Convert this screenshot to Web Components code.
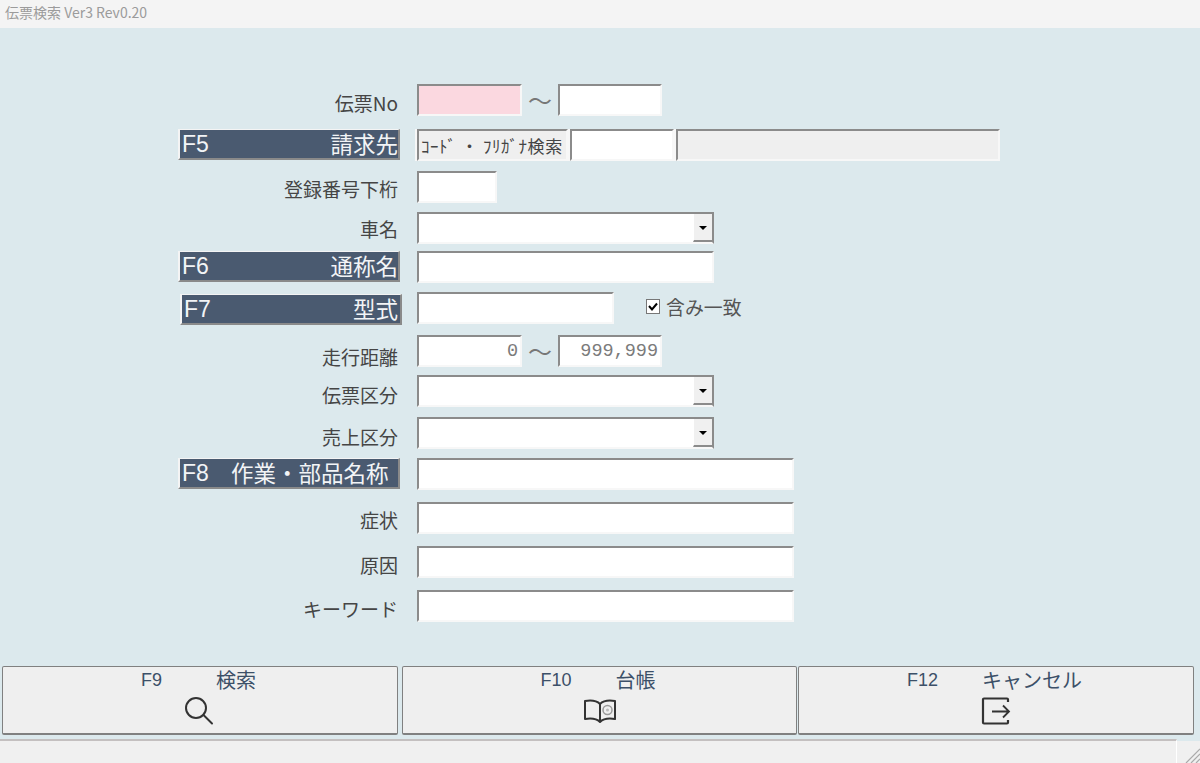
<!DOCTYPE html>
<html lang="ja">
<head>
<meta charset="utf-8">
<title>伝票検索</title>
<style>
  html, body { margin: 0; height: 100%; background: #dce9ed; overflow: hidden; }
  body { font-family: "Noto Sans CJK JP", "Liberation Sans", sans-serif; }
</style>
</head>
<body>
<slip-search>
  <title-bar slot="title">伝票検索 Ver3 Rev0.20</title-bar>

  <form-row gap="56" label="伝票No" drop="4">
    <text-field width="105" pink></text-field><range-mark></range-mark><text-field width="104"></text-field>
  </form-row>
  <form-row gap="13">
    <key-label slot="label" fkey="F5">請求先</key-label>
    <lookup-field></lookup-field>
  </form-row>
  <form-row gap="10" label="登録番号下桁" drop="3">
    <text-field width="80"></text-field>
  </form-row>
  <form-row gap="9" label="車名" drop="2">
    <combo-box></combo-box>
  </form-row>
  <form-row gap="7">
    <key-label slot="label" fkey="F6">通称名</key-label>
    <text-field width="297"></text-field>
  </form-row>
  <form-row gap="9">
    <key-label slot="label" fkey="F7" shift>型式</key-label>
    <text-field width="197"></text-field>
    <check-box>含み一致</check-box>
  </form-row>
  <form-row gap="11" label="走行距離" drop="7">
    <text-field width="105" value="0"></text-field><range-mark></range-mark><text-field width="104" value="999,999"></text-field>
  </form-row>
  <form-row gap="8" label="伝票区分" drop="5">
    <combo-box></combo-box>
  </form-row>
  <form-row gap="10" label="売上区分" drop="5">
    <combo-box></combo-box>
  </form-row>
  <form-row gap="9">
    <key-label slot="label" fkey="F8" tight>作業・部品名称</key-label>
    <text-field width="377"></text-field>
  </form-row>
  <form-row gap="12" label="症状" drop="3"><text-field width="377"></text-field></form-row>
  <form-row gap="12" label="原因" drop="4"><text-field width="377"></text-field></form-row>
  <form-row gap="12" label="キーワード" drop="4"><text-field width="377"></text-field></form-row>

  <fn-button slot="buttons" fkey="F9" width="396" after="4">検索
    <svg slot="icon" width="32" height="30" viewBox="0 0 32 30" fill="none" stroke="#333" stroke-width="2"><circle cx="12" cy="12" r="10"/><path d="M19.500 19l8.500 8.500" stroke-linecap="round"/></svg>
  </fn-button>
  <fn-button slot="buttons" fkey="F10" width="395" after="1">台帳
    <svg slot="icon" width="34" height="26" viewBox="0 0 34 26" fill="none" stroke="#333" stroke-width="2"><path d="M17 6C14 3 8 2 2 3v18c6-1 12 0 15 3 3-3 9-4 15-3V3c-6-1-12 0-15 3z" stroke-linejoin="round"/><path d="M17 6v18"/><circle cx="24.500" cy="12" r="4.500" stroke="#999" stroke-width="1.500"/><circle cx="24.500" cy="12" r="1.500" fill="#bbb" stroke="none"/></svg>
  </fn-button>
  <fn-button slot="buttons" fkey="F12" width="396" after="0">キャンセル
    <svg slot="icon" width="30" height="28" viewBox="0 0 30 28" fill="none" stroke="#333" stroke-width="2.200"><path d="M27 5V2.500a1 1 0 0 0-1-1H3a1 1 0 0 0-1 1v23a1 1 0 0 0 1 1h23a1 1 0 0 0 1-1V23" stroke-linejoin="round"/><path d="M11 14.500h17M22 8.500l6 6-6 6" stroke-width="1.800"/></svg>
  </fn-button>
  <status-bar slot="status"></status-bar>
</slip-search>

<script>
function shell(el, html) {
  el.attachShadow({ mode: 'open' }).innerHTML = html;
}

class SlipSearch extends HTMLElement {
  constructor() {
    super();
    shell(this, `<style>
      :host { display: flex; flex-direction: column; height: 763px; background: #dce9ed; }
      .form { flex: 1; }
      .buttons { display: flex; padding: 0 6px 4px 2px; }
    </style>
    <slot name="title"></slot>
    <div class="form"><slot></slot></div>
    <div class="buttons"><slot name="buttons"></slot></div>
    <slot name="status"></slot>`);
  }
}

class TitleBar extends HTMLElement {
  constructor() {
    super();
    shell(this, `<style>
      :host { display: block; height: 28px; line-height: 25px; padding-left: 5px; background: #f4f4f4; color: #9b9b9b; font-size: 14px; }
    </style><slot></slot>`);
  }
}

class FormRow extends HTMLElement {
  constructor() {
    super();
    shell(this, `<style>
      :host { display: flex; height: 32px; padding-left: 178px; }
      .label { width: 222px; margin-right: 17px; display: flex; justify-content: flex-end; flex: none; }
      .plain { padding-right: 2px; font-size: 19px; line-height: 30px; color: #454545; white-space: nowrap; }
      .ctl { display: flex; flex: 1; }
    </style>
    <div class="label"><slot name="label"><span class="plain"></span></slot></div>
    <div class="ctl"><slot></slot></div>`);
  }
  connectedCallback() {
    this.style.marginTop = this.getAttribute('gap') + 'px';
    const plain = this.shadowRoot.querySelector('.plain');
    plain.textContent = this.getAttribute('label') || '';
    plain.style.paddingTop = (this.getAttribute('drop') || 0) + 'px';
  }
}

class KeyLabel extends HTMLElement {
  constructor() {
    super();
    shell(this, `<style>
      :host { display: flex; box-sizing: border-box; width: 222px; height: 31px; justify-content: space-between; align-items: center;
        background: #4a5a70; color: #f2f4f6; font-size: 22.500px; line-height: 27px;
        border: solid #f4f4f4; border-width: 1px 0 0 2px; border-right: 2px solid #8a8a8a; border-bottom: 2px solid #8a8a8a; padding: 0 0 0 2px; }
      :host([shift]) { margin: 2px -2px -1px 2px; padding-right: 2px; }
      :host([tight]) { justify-content: flex-start; }
      .k { font-family: "Liberation Sans", sans-serif; font-size: 23px; }
      .t { padding-bottom: 2px; }
      :host([tight]) .k { width: 49px; }
    </style><span class="k"></span><span class="t"><slot></slot></span>`);
  }
  connectedCallback() {
    this.shadowRoot.querySelector('.k').textContent = this.getAttribute('fkey');
  }
}

class TextField extends HTMLElement {
  constructor() {
    super();
    shell(this, `<style>
      :host { display: block; box-sizing: border-box; height: 32px; flex: none; background: #fff; color: #7b7b7b;
        border: 2px solid; border-color: #8b8b8b #f7f7f7 #f7f7f7 #8b8b8b; text-align: right; padding-right: 2px;
        font: 18.500px/30px "Liberation Mono", monospace; }
      :host([pink]) { background: #fbd8e0; }
    </style><span></span>`);
  }
  connectedCallback() {
    this.style.width = this.getAttribute('width') + 'px';
    this.shadowRoot.querySelector('span').textContent = this.getAttribute('value') || '';
  }
}

class RangeMark extends HTMLElement {
  constructor() {
    super();
    shell(this, `<style>
      :host { display: block; width: 36px; flex: none; text-align: center; color: #777; font-size: 24px; line-height: 32px; }
    </style>〜`);
  }
}

class LookupField extends HTMLElement {
  constructor() {
    super();
    shell(this, `<style>
      :host { display: flex; gap: 2px; height: 32px; margin-left: -2px; padding: 0 0 0 2px; background: #f7f7f7; }
      div { box-sizing: border-box; height: 32px; border: 2px solid; border-color: #8b8b8b #f7f7f7 #f7f7f7 #8b8b8b; }
      .cap { width: 151px; background: #efefef; color: #444; font-size: 17px; letter-spacing: .55px; line-height: 30px; padding-left: 2px; white-space: nowrap; overflow: hidden; }
      .code { width: 104px; background: #fff; }
      .name { width: 324px; background: #efefef; }
    </style>
    <div class="cap">ｺｰﾄﾞ ・ ﾌﾘｶﾞﾅ検索</div><div class="code"></div><div class="name"></div>`);
  }
}

class ComboBox extends HTMLElement {
  constructor() {
    super();
    shell(this, `<style>
      :host { display: flex; justify-content: flex-end; box-sizing: border-box; width: 297px; height: 32px; background: #fff;
        border: 2px solid; border-color: #8b8b8b #8b8b8b #f7f7f7 #8b8b8b; }
      .btn { box-sizing: border-box; width: 19px; height: 28px; background: #f0f0f0; display: flex; align-items: center; justify-content: center;
        border-bottom: 2px solid #8b8b8b; border-left: 1px solid #fff; padding-top: 2px; }
      .btn::after { content: ""; border: 4px solid transparent; border-top-color: #000; border-bottom-width: 0; }
    </style><div class="btn"></div>`);
  }
}

class CheckBox extends HTMLElement {
  constructor() {
    super();
    shell(this, `<style>
      :host { display: flex; align-items: center; box-sizing: border-box; height: 32px; padding-bottom: 4px; margin-left: 32px; color: #555; font-size: 18.900px; white-space: nowrap; }
      svg { margin-right: 6px; flex: none; }
    </style>
    <svg width="14" height="15" viewBox="0 0 14 15"><rect x=".5" y=".5" width="13" height="14" fill="#fff" stroke="#777"/><path d="M3 7l3 3.500 5-6" fill="none" stroke="#000" stroke-width="2"/></svg>
    <slot></slot>`);
  }
}

class FnButton extends HTMLElement {
  constructor() {
    super();
    shell(this, `<style>
      :host { display: block; box-sizing: border-box; height: 69px; flex: none; background: #efefef; color: #3c5068; text-align: center;
        border: 1px solid #808080; border-bottom-width: 2px; border-radius: 2px; }
      .cap { display: flex; justify-content: center; box-sizing: border-box; padding-right: 3px; height: 27px; line-height: 26px; font-size: 20px; }
      .k { width: 75px; text-align: left; font: 18px/26px "Liberation Sans", sans-serif; }
      .ico { display: flex; justify-content: center; align-items: center; height: 34px; }
    </style>
    <div class="cap"><span class="k"></span><span><slot></slot></span></div>
    <div class="ico"><slot name="icon"></slot></div>`);
  }
  connectedCallback() {
    this.style.width = this.getAttribute('width') + 'px';
    this.style.marginRight = this.getAttribute('after') + 'px';
    this.shadowRoot.querySelector('.k').textContent = this.getAttribute('fkey');
  }
}

class StatusBar extends HTMLElement {
  constructor() {
    super();
    shell(this, `<style>
      :host { display: flex; height: 24px; background: #f0f0f0; }
      .pane { flex: 1; border-top: 2px solid #c4c0c0; border-right: 1px solid #fff; }
      .grip { width: 23px; flex: none; display: flex; align-items: flex-end; justify-content: flex-end; background: #dce9ed linear-gradient(#f0f0f0, #f0f0f0) 0 2px no-repeat; }
    </style>
    <div class="pane"></div>
    <div class="grip"><svg width="16" height="16" viewBox="0 0 16 16" stroke="#aaa" stroke-width="1.200"><path d="M16 2L2 16M16 7l-9 9M16 12l-4 4"/></svg></div>`);
  }
}

customElements.define('slip-search', SlipSearch);
customElements.define('title-bar', TitleBar);
customElements.define('form-row', FormRow);
customElements.define('key-label', KeyLabel);
customElements.define('text-field', TextField);
customElements.define('range-mark', RangeMark);
customElements.define('lookup-field', LookupField);
customElements.define('combo-box', ComboBox);
customElements.define('check-box', CheckBox);
customElements.define('fn-button', FnButton);
customElements.define('status-bar', StatusBar);
</script>
</body>
</html>
